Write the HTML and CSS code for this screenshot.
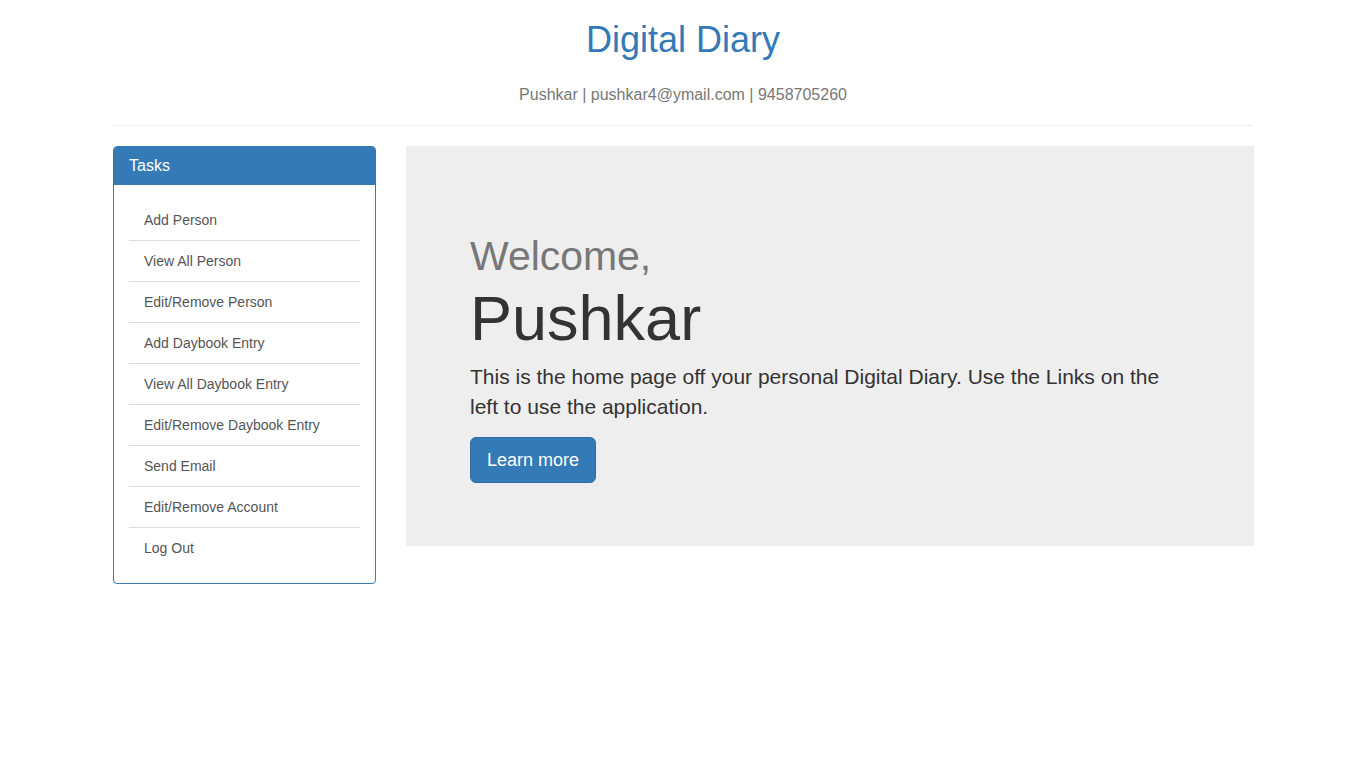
FILE: index.html
```html
<!DOCTYPE html>
<html lang="en">
<head>
<meta charset="utf-8">
<title>Digital Diary</title>
<link rel="stylesheet" href="styles.css">
</head>
<body>
<div class="container">
  <header class="page-header">
    <h1 class="site-title">Digital Diary</h1>
    <p class="site-info">Pushkar | pushkar4@ymail.com | 9458705260</p>
  </header>
  <hr class="divider">
  <div class="row">
    <aside class="panel">
      <div class="panel-heading">Tasks</div>
      <div class="panel-body">
        <ul class="task-list">
          <li><a href="#">Add Person</a></li>
          <li><a href="#">View All Person</a></li>
          <li><a href="#">Edit/Remove Person</a></li>
          <li><a href="#">Add Daybook Entry</a></li>
          <li><a href="#">View All Daybook Entry</a></li>
          <li><a href="#">Edit/Remove Daybook Entry</a></li>
          <li><a href="#">Send Email</a></li>
          <li><a href="#">Edit/Remove Account</a></li>
          <li><a href="#">Log Out</a></li>
        </ul>
      </div>
    </aside>
    <main class="jumbotron">
      <h1 class="welcome"><small>Welcome,</small><br>Pushkar</h1>
      <p class="lead">This is the home page off your personal Digital Diary. Use the Links on the left to use the application.</p>
      <div class="actions"><a class="btn" href="#">Learn more</a></div>
    </main>
  </div>
</div>
</body>
</html>
```
FILE: styles.css
```css
* { box-sizing: border-box; }
html, body { margin: 0; padding: 0; }
body {
  font-family: "Liberation Sans", Arial, Helvetica, sans-serif;
  font-size: 14px;
  line-height: 1.42857143;
  color: #333;
  background: #fff;
}
.container {
  width: 1170px;
  margin: 0 auto;
  padding: 0 15px;
}
.page-header { text-align: center; }
.site-title {
  margin: 20px 0 0;
  font-size: 36px;
  font-weight: 500;
  line-height: 1.1;
  color: #337ab7;
}
.site-info {
  margin: 24px 0 0;
  font-size: 16px;
  color: #777;
}
.divider {
  margin: 19px 0 20px;
  border: 0;
  border-top: 1px solid #eee;
  height: 0;
}
.row {
  display: grid;
  grid-template-columns: 263px 848px;
  column-gap: 30px;
  align-items: start;
}
.panel {
  border: 1px solid #337ab7;
  border-radius: 4px;
  background: #fff;
  overflow: hidden;
}
.panel-heading {
  background: #337ab7;
  color: #fff;
  font-size: 16px;
  line-height: 17px;
  padding: 10px 15px;
  border-bottom: 1px solid #337ab7;
}
.panel-body { padding: 15px; }
.task-list {
  list-style: none;
  margin: 0;
  padding: 0;
}
.task-list li { border-bottom: 1px solid #ddd; }
.task-list li:last-child { border-bottom: 0; }
.task-list a {
  display: block;
  padding: 10px 15px;
  line-height: 20px;
  color: #555;
  text-decoration: none;
}
.jumbotron {
  background: #eee;
  padding: 48px 64px 48px;
  color: inherit;
}
.welcome {
  margin: 20px 0 9px;
  font-size: 63px;
  font-weight: 500;
  line-height: 1.1;
  color: #333;
}
.welcome small {
  font-size: 65%;
  font-weight: 400;
  line-height: 1;
  color: #777;
}
.lead {
  margin: 0 0 15px;
  font-size: 21px;
  line-height: 30px;
}
.actions { margin-bottom: 15px; height: 46px; }
.btn {
  display: inline-block;
  padding: 10px 16px;
  font-size: 18px;
  line-height: 24px;
  color: #fff;
  background: #337ab7;
  border: 1px solid #2e6da4;
  border-radius: 6px;
  text-decoration: none;
}
```
